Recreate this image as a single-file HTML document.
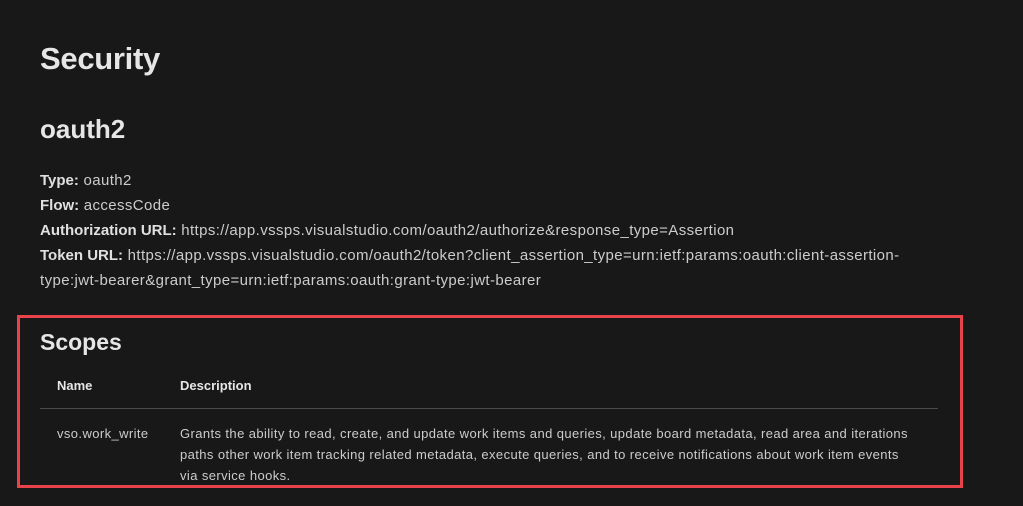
<!DOCTYPE html>
<html><head><meta charset="utf-8"><style>
html,body{margin:0;background:#181818;width:1023px;height:506px;overflow:hidden}
body{font-family:"Liberation Sans",sans-serif;color:#cccccc;position:relative}
h1{position:absolute;left:40px;top:41px;margin:0;font-size:31px;font-weight:600;color:#e6e6e6;letter-spacing:-0.3px}
h2{position:absolute;left:40px;top:114px;margin:0;font-size:26px;font-weight:bold;color:#e6e6e6}
.p{position:absolute;left:40px;top:168px;font-size:15px;line-height:25px;color:#cccccc;white-space:nowrap;letter-spacing:0.4px}
.p b{color:#e0e0e0;letter-spacing:0}
.box{position:absolute;left:17px;top:315px;width:940px;height:167px;border:3px solid #e8434b}
h3{position:absolute;left:40px;top:329px;margin:0;font-size:23px;font-weight:600;color:#e6e6e6}
.th{position:absolute;top:378px;font-size:13px;font-weight:bold;color:#e6e6e6}
.line{position:absolute;left:40px;top:408px;width:898px;height:1px;background:#4a4a4a}
.td{position:absolute;top:423px;font-size:13px;line-height:21px;color:#cccccc;white-space:nowrap;letter-spacing:0.4px}
</style></head><body>
<h1>Security</h1>
<h2>oauth2</h2>
<div class="p"><b>Type:</b> oauth2<br><b>Flow:</b> accessCode<br><b>Authorization URL:</b> https://app.vssps.visualstudio.com/oauth2/authorize&amp;response_type=Assertion<br><b>Token URL:</b> https://app.vssps.visualstudio.com/oauth2/token?client_assertion_type=urn:ietf:params:oauth:client-assertion-<br>type:jwt-bearer&amp;grant_type=urn:ietf:params:oauth:grant-type:jwt-bearer</div>
<div class="box"></div>
<h3>Scopes</h3>
<div class="th" style="left:57px">Name</div>
<div class="th" style="left:180px">Description</div>
<div class="line"></div>
<div class="td" style="left:57px">vso.work_write</div>
<div class="td" style="left:180px">Grants the ability to read, create, and update work items and queries, update board metadata, read area and iterations<br>paths other work item tracking related metadata, execute queries, and to receive notifications about work item events<br>via service hooks.</div>
</body></html>
